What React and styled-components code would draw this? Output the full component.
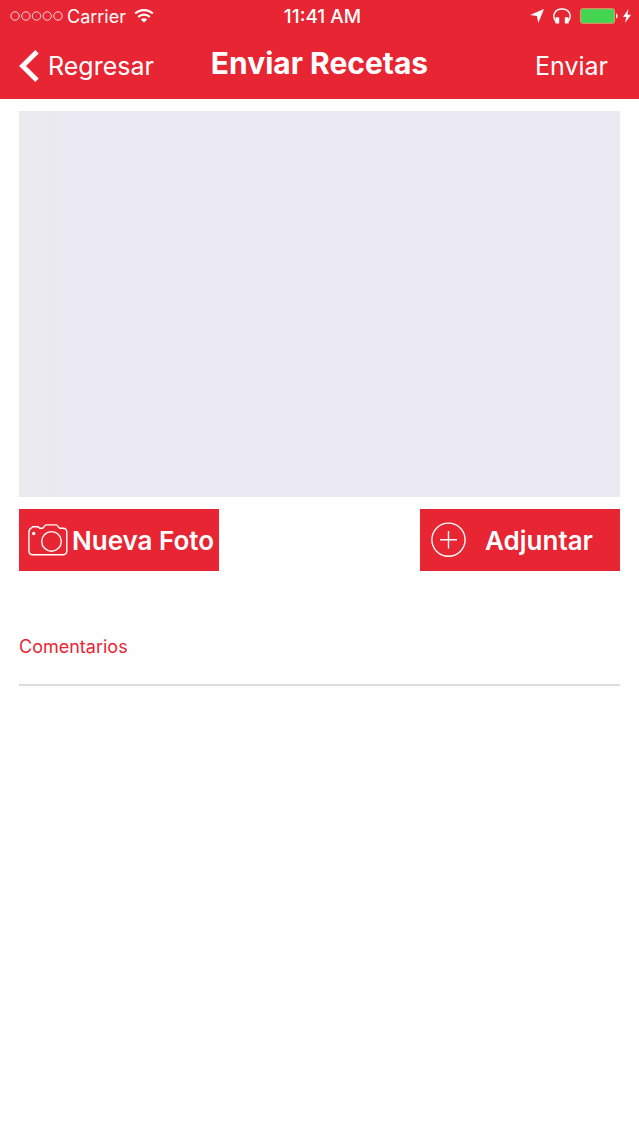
import React from "react";
import styled, { createGlobalStyle } from "styled-components";

const red = "#e82533";

const GlobalStyle = createGlobalStyle`
  * { box-sizing: border-box; }
  body {
    margin: 0;
    background: #fefefe;
    font-family: Inter, "Liberation Sans", sans-serif;
  }
  button, input { font-family: inherit; }
`;

const Screen = styled.div`
  display: flex;
  flex-direction: column;
  min-height: 100vh;
`;

const Header = styled.header`
  background: ${red};
  color: #fff;
`;

const Bar = styled.div`
  display: grid;
  grid-template-columns: 1fr auto 1fr;
  align-items: center;
`;

const StatusBar = styled(Bar)`
  height: 32px;
  padding: 0 8px 0 10px;
  font-size: 18px;
  line-height: 24px;
`;

const NavBar = styled(Bar)`
  height: 67px;
  padding: 0 19px;
`;

const Group = styled.div`
  display: flex;
  align-items: center;
  justify-content: ${(p) => (p.$end ? "flex-end" : "flex-start")};
  gap: ${(p) => p.$gap}px;
`;

const StatusText = styled.span`
  padding-top: 2px;
`;

const Time = styled(StatusText)`
  padding-left: 4px;
  font-size: 19px;
  font-weight: 500;
`;

const NavButton = styled.button`
  display: flex;
  align-items: center;
  gap: 9px;
  padding: 0 ${(p) => (p.$end ? 12 : 0)}px 0 0;
  border: 0;
  background: none;
  color: inherit;
  font-size: 25px;
  font-weight: 400;
  line-height: 32px;
  cursor: pointer;
`;

const Title = styled.h1`
  margin: 0;
  font-size: 30px;
  font-weight: 700;
  line-height: 36px;
  padding-bottom: 5px;
`;

const Content = styled.main`
  display: flex;
  flex-direction: column;
  padding: 12px 19px;
`;

const Preview = styled.section`
  height: 386px;
  background: linear-gradient(90deg, #ebeaee, #ebe9f3 12%, #ebe9f3 94%, #ebe9f0);
`;

const Actions = styled.div`
  display: flex;
  justify-content: space-between;
  margin-top: 12px;
`;

const ActionButton = styled.button`
  display: flex;
  align-items: center;
  gap: ${(p) => p.$gap}px;
  width: 200px;
  height: 62px;
  padding: 0 0 0 ${(p) => p.$inset}px;
  border: 0;
  background: ${red};
  color: #fff;
  font-size: 26px;
  font-weight: 600;
  line-height: 32px;
  white-space: nowrap;
  cursor: pointer;

  span { padding-top: 2px; }
`;

const Field = styled.div`
  display: flex;
  flex-direction: column;
  margin-top: 64px;
`;

const FieldLabel = styled.label`
  color: ${red};
  font-size: 18px;
  line-height: 24px;
`;

const FieldInput = styled.input`
  height: 27px;
  padding: 0;
  border: 0;
  border-bottom: 2px solid #dddce0;
  border-radius: 0;
  background: transparent;
  font-size: 18px;
  outline: none;
`;

const Icon = styled.svg`
  display: block;
  flex: none;
`;

function SignalIcon() {
  return (
    <Icon width="53" height="12" viewBox="0 0 53 12" fill="none" stroke="#fff" strokeWidth="0.8" aria-hidden="true">
      {[5, 15.8, 26.5, 37.2, 48].map((x) => (
        <circle key={x} cx={x} cy="6" r="4.2" />
      ))}
    </Icon>
  );
}

function WifiIcon() {
  return (
    <Icon width="20" height="16" viewBox="0 0 20 16" fill="none" stroke="#fff" strokeWidth="2.1" aria-hidden="true">
      <path d="M1.2 5.6C6 .9 14 .9 18.8 5.6" />
      <path d="M4.2 9C7.4 5.8 12.6 5.8 15.8 9" />
      <path d="M10 14.6 6.8 11.5C8.6 9.8 11.4 9.8 13.2 11.5Z" fill="#fff" stroke="none" />
    </Icon>
  );
}

function LocationIcon() {
  return (
    <Icon width="14" height="14" viewBox="0 0 14 14" fill="#fff" aria-hidden="true">
      <path d="M14 0 0 6.1 6.9 7 8.3 14Z" />
    </Icon>
  );
}

function HeadphonesIcon() {
  return (
    <Icon width="18" height="16" viewBox="0 0 18 16" fill="none" stroke="#fff" strokeWidth="1.4" aria-hidden="true">
      <path d="M2.8 13.7C-1.700 7 2.3 1 9 1s10.7 6 6.2 12.7" />
      <rect x="2.4" y="9.2" width="3.8" height="6.3" rx="0.5" fill="#fff" stroke="none" />
      <rect x="11.8" y="9.2" width="3.8" height="6.3" rx="0.5" fill="#fff" stroke="none" />
    </Icon>
  );
}

function BatteryIcon() {
  return (
    <Icon width="38" height="16" viewBox="0 0 38 16" aria-hidden="true">
      <rect x="0.5" y="0.7" width="34" height="14.6" rx="2" fill="#43d551" stroke="#dd9d6b" />
      <path d="M36 5.5c2.2.6 2.2 4.4 0 5Z" fill="#fff" />
    </Icon>
  );
}

function BoltIcon() {
  return (
    <Icon width="8" height="14" viewBox="0 0 8 14" fill="#fff" aria-hidden="true">
      <path d="M5.5 0 0 8h3.3L2 14l6-8.2H4.5Z" />
    </Icon>
  );
}

function BackIcon() {
  return (
    <Icon width="20" height="32" viewBox="0 0 20 32" fill="none" stroke="#fff" strokeWidth="4.8" aria-hidden="true">
      <path d="M18 1.7 3.5 16 18 30.3" />
    </Icon>
  );
}

function CameraIcon() {
  return (
    <Icon width="40" height="32" viewBox="0 0 40 32" fill="none" stroke="#fff" strokeWidth="1.4" aria-hidden="true">
      <path d="M3.5 3.9 4.6 2.7h5.6l1.5 1.5h2.6c1.8 0 2-3.3 4-3.3h9.8c2 0 2.2 3.3 4.2 3.3h2.5c2.500 0 4 1.600 4 4v18.600c0 2.500-1.600 4-4 4H4.900c-2.600 0-4-1.500-4-4V8.200c0-2.200.8-3.500 2.600-4.300Z" />
      <circle cx="23.5" cy="17.4" r="9.8" />
      <circle cx="5.7" cy="9.5" r="1.7" fill="#fff" stroke="none" />
    </Icon>
  );
}

function AddIcon() {
  return (
    <Icon width="36" height="36" viewBox="0 0 36 36" fill="none" stroke="#fff" strokeWidth="1.4" aria-hidden="true">
      <circle cx="17.5" cy="17.7" r="16.6" />
      <path d="M17.5 9v17.4M9 17.7h17" />
    </Icon>
  );
}

export default function App() {
  return (
    <Screen>
      <GlobalStyle />
      <Header>
        <StatusBar>
          <Group $gap={8}>
            <Group $gap={4}>
              <SignalIcon />
              <StatusText>Carrier</StatusText>
            </Group>
            <WifiIcon />
          </Group>
          <Time>11:41 AM</Time>
          <Group $end $gap={5}>
            <Group $gap={9}>
              <LocationIcon />
              <HeadphonesIcon />
              <BatteryIcon />
            </Group>
            <BoltIcon />
          </Group>
        </StatusBar>
        <NavBar>
          <Group>
            <NavButton type="button">
              <BackIcon />
              Regresar
            </NavButton>
          </Group>
          <Title>Enviar Recetas</Title>
          <Group $end>
            <NavButton type="button" $end>Enviar</NavButton>
          </Group>
        </NavBar>
      </Header>
      <Content>
        <Preview aria-label="Foto" />
        <Actions>
          <ActionButton type="button" $inset={9} $gap={4}>
            <CameraIcon />
            <span>Nueva Foto</span>
          </ActionButton>
          <ActionButton type="button" $inset={11} $gap={18}>
            <AddIcon />
            <span>Adjuntar</span>
          </ActionButton>
        </Actions>
        <Field>
          <FieldLabel htmlFor="comentarios">Comentarios</FieldLabel>
          <FieldInput id="comentarios" type="text" />
        </Field>
      </Content>
    </Screen>
  );
}
